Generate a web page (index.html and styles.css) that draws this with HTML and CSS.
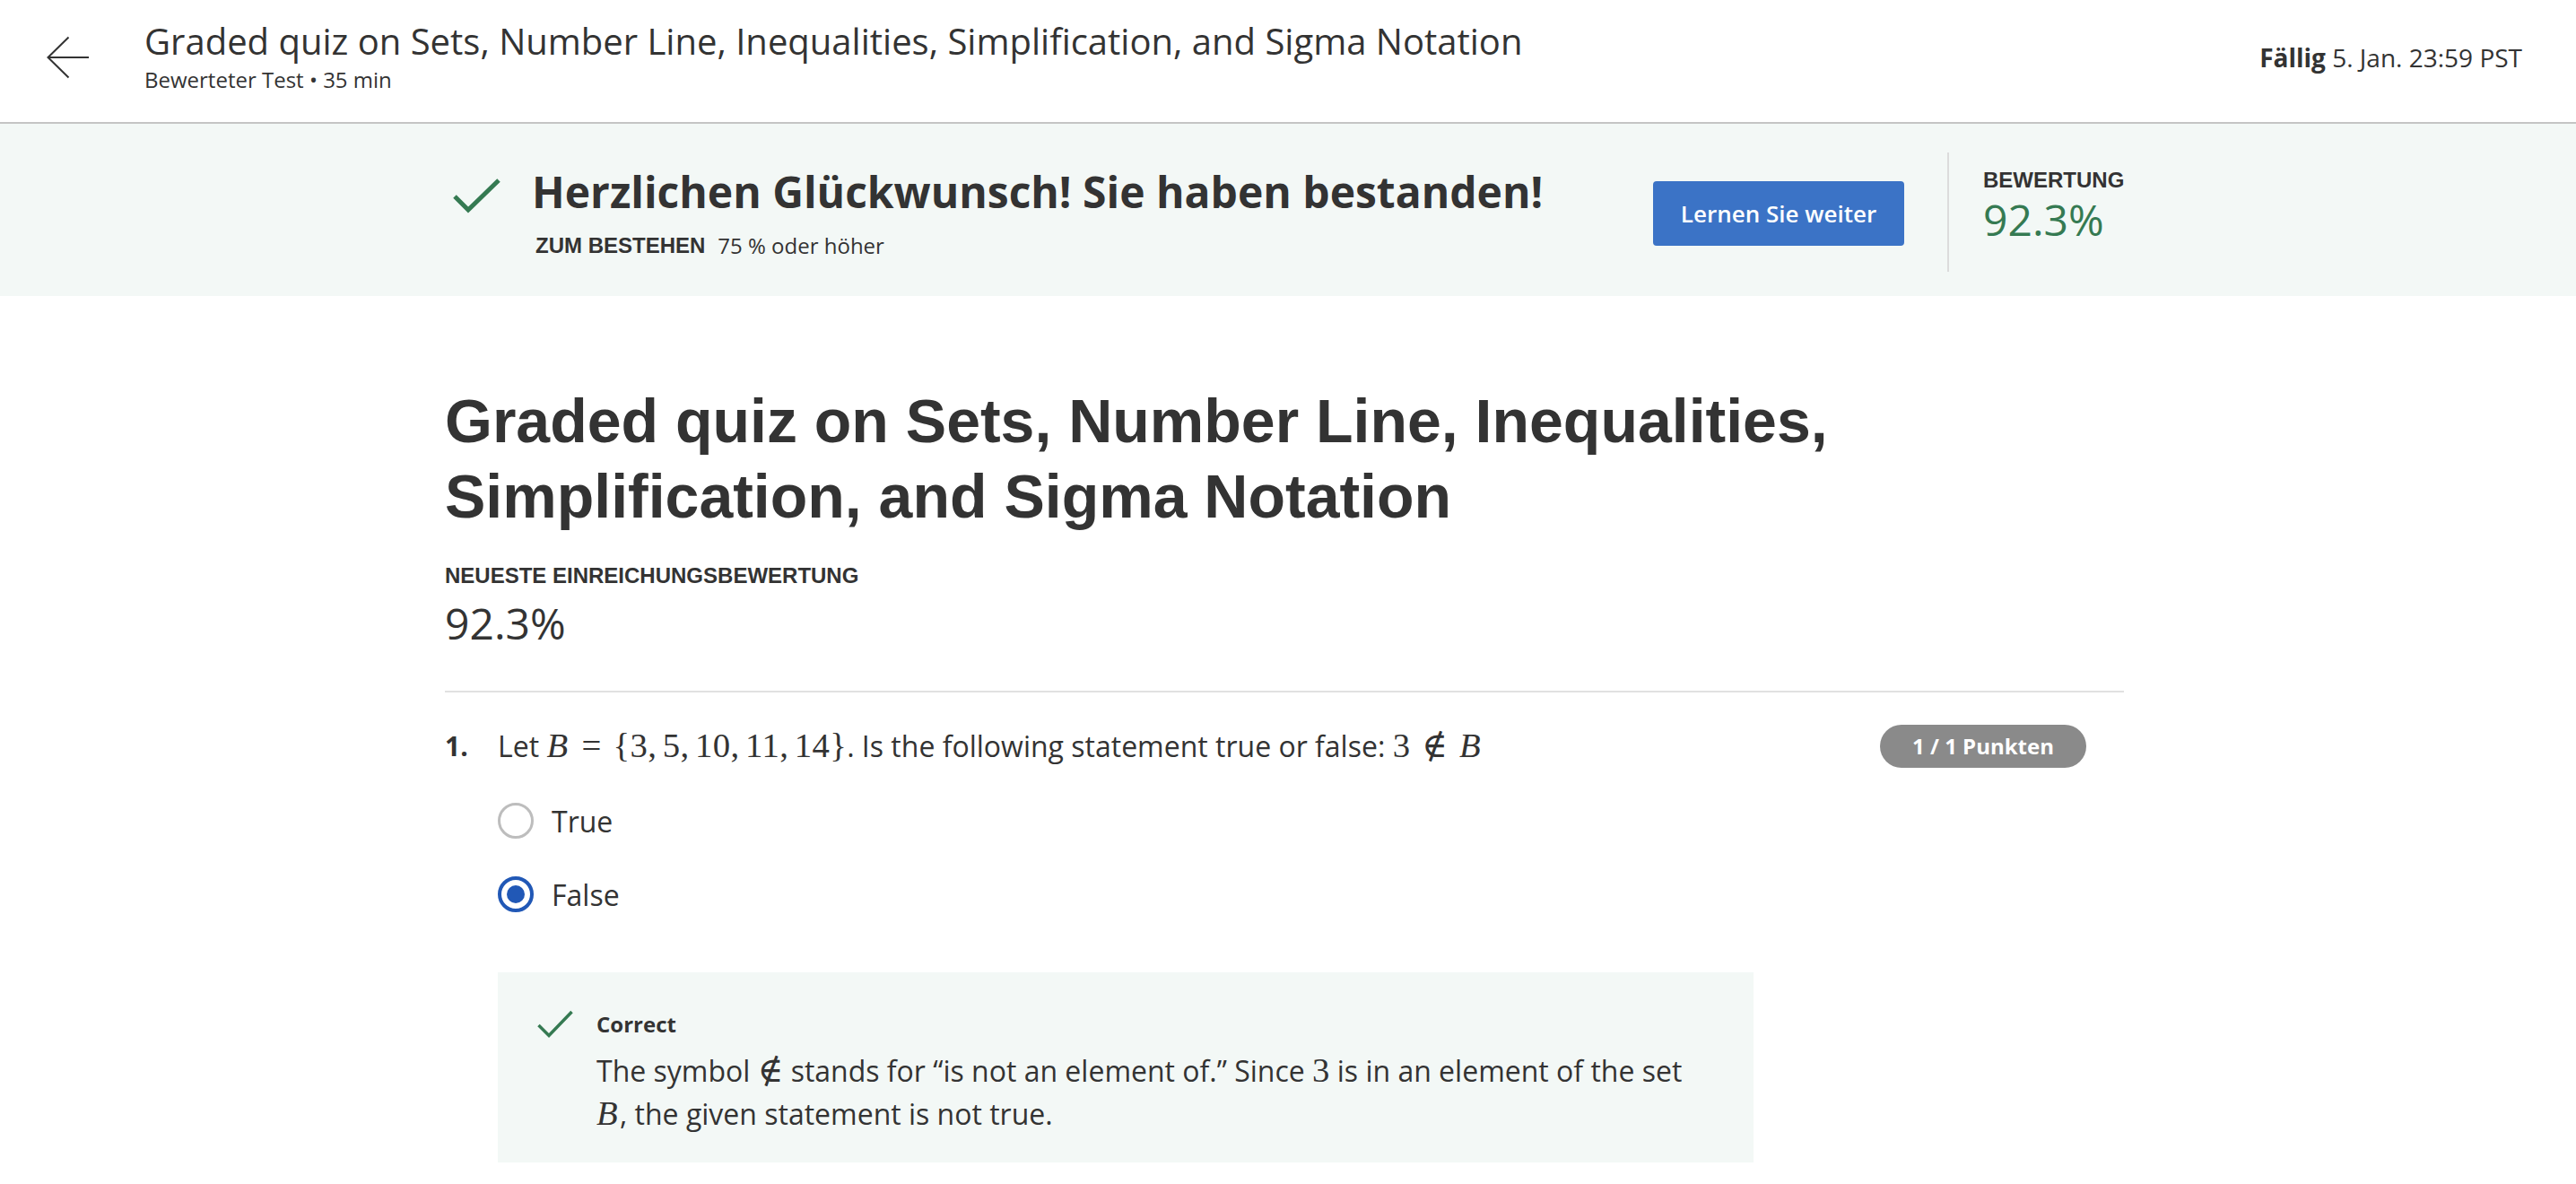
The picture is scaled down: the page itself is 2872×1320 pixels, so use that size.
FILE: index.html
```html
<!DOCTYPE html>
<html lang="de">
<head>
<meta charset="utf-8">
<title>Graded quiz on Sets, Number Line, Inequalities, Simplification, and Sigma Notation</title>
<link rel="stylesheet" href="styles.css">
</head>
<body>
<header class="topbar">
  <a class="back" href="#" aria-label="Zurück">
    <svg width="48" height="48" viewBox="0 0 48 48"><path d="M47 24H1.5M24.5 1.5L1.5 24L24.5 46.5" fill="none" stroke="#333" stroke-width="2"/></svg>
  </a>
  <div class="titles">
    <div class="title">Graded quiz on Sets, Number Line, Inequalities, Simplification, and Sigma Notation</div>
    <div class="subtitle">Bewerteter Test • 35 min</div>
  </div>
  <div class="due"><b>Fällig</b> 5. Jan. 23:59 PST</div>
</header>

<section class="banner">
  <div class="banner-inner">
    <div class="pass">
      <svg class="pass-check" width="53" height="40" viewBox="0 0 53 40"><polyline points="2,21 17,36 51,3" fill="none" stroke="#357a52" stroke-width="5"/></svg>
      <div class="pass-text">
        <div class="pass-title">Herzlichen Glückwunsch! Sie haben bestanden!</div>
        <div class="pass-sub"><span class="caps">ZUM BESTEHEN</span><span>75 % oder höher</span></div>
      </div>
    </div>
    <a class="btn" href="#">Lernen Sie weiter</a>
    <div class="vdivider"></div>
    <div class="grade">
      <div class="caps">BEWERTUNG</div>
      <div class="grade-value">92.3%</div>
    </div>
  </div>
</section>

<main class="content">
  <h1 class="quiz-title">Graded quiz on Sets, Number Line, Inequalities, Simplification, and Sigma Notation</h1>
  <div class="caps latest-label">NEUESTE EINREICHUNGSBEWERTUNG</div>
  <div class="latest-score">92.3%</div>
  <hr class="rule">

  <div class="question">
    <div class="qnum">1.</div>
    <div class="qbody">
      <div class="qhead">
        <div class="qtext">Let <span class="m"><i>B</i><span class="rel">=</span>{3<span class="pn">,</span>5<span class="pn">,</span>10<span class="pn">,</span>11<span class="pn">,</span>14}</span>. Is the following statement true or false: <span class="m">3<span class="rel">∉</span><i>B</i></span></div>
        <div class="badge">1 / 1 Punkten</div>
      </div>
      <div class="options">
        <label class="option"><span class="radio"></span><span>True</span></label>
        <label class="option"><span class="radio selected"><span class="dot"></span></span><span>False</span></label>
      </div>
      <div class="feedback">
        <svg class="fb-check" width="40" height="31" viewBox="0 0 40 31"><polyline points="1.5,17 13,28.5 38.5,2" fill="none" stroke="#357a52" stroke-width="3.5"/></svg>
        <div class="fb-body">
          <div class="fb-title">Correct</div>
          <p class="fb-text">The symbol <span class="m">∉</span> stands for “is not an element of.” Since <span class="m">3</span> is in an element of the set <span class="m"><i>B</i></span>, the given statement is not true.</p>
        </div>
      </div>
    </div>
  </div>
</main>
</body>
</html>
```

FILE: styles.css
```css
* { box-sizing: border-box; }

body {
  margin: 0;
  font-family: "Open Sans", "Noto Sans", sans-serif;
  color: #333;
  background: #fff;
}

/* top bar */
.topbar {
  display: flex;
  align-items: center;
  height: 138px;
  padding: 0 60px 8px 52px;
  border-bottom: 2px solid #c4c4c4;
}
.back { display: flex; width: 48px; height: 48px; margin-right: 61px; }
.titles { flex: 1; display: flex; flex-direction: column; }
.title { font-size: 40px; line-height: 47px; }
.subtitle { font-size: 24px; line-height: 36px; margin-top: 2px; }
.due { font-size: 28px; line-height: 40px; }
.due b { font-weight: 700; }

/* banner */
.banner { background: #f3f8f6; height: 192px; padding-top: 8px; }
.banner-inner {
  width: 1872px;
  height: 100%;
  margin-left: calc(50% - 940px);
  display: flex;
  align-items: center;
}
.pass { display: flex; align-items: flex-start; }
.pass-check { margin: 14px 35px 0 9px; flex: none; }
.pass-title { font-size: 48px; line-height: 60px; font-weight: 700; }
.pass-sub { margin-top: 12px; padding-left: 4px; font-size: 24px; line-height: 36px; display: flex; }
.caps {
  font-family: "Liberation Sans", Arial, sans-serif;
  font-weight: 700;
  font-size: 24px;
  line-height: 36px;
}
.pass-sub .caps { margin-right: 14px; }
.btn {
  margin-left: auto;
  width: 280px;
  height: 72px;
  display: flex;
  align-items: center;
  justify-content: center;
  background: #3b73c6;
  border-radius: 4px;
  color: #fff;
  font-size: 26px;
  font-weight: 600;
  text-decoration: none;
}
.vdivider { width: 2px; height: 133px; background: #dcdcdc; margin: 0 38px 4px 48px; }
.grade { width: 157px; align-self: flex-start; margin-top: 37px; }
.grade-value { color: #357a52; font-size: 48px; line-height: 51px; }

/* content */
.content { width: 1872px; margin-left: calc(50% - 940px); padding: 97px 0 120px; }
.quiz-title {
  margin: 0;
  font-family: "Liberation Sans", Arial, sans-serif;
  font-weight: 700;
  font-size: 68px;
  line-height: 84.4px;
}
.latest-label { margin-top: 28px; }
.latest-score { margin-top: 6px; font-size: 48px; line-height: 57.6px; }
.rule { margin: 47px 0 0; border: none; height: 2px; background: #e1e1e1; }

.question { margin-top: 36px; display: flex; align-items: flex-start; }
.qnum { width: 59px; flex: none; font-size: 30px; line-height: 48px; font-weight: 700; }
.qbody { flex: 1; }
.qhead { display: flex; align-items: flex-start; }
.qtext { flex: 1; font-size: 32px; line-height: 48px; }
.badge {
  flex: none;
  width: 230px;
  height: 48px;
  margin-right: 42px;
  border-radius: 24px;
  background: #8a8a8a;
  color: #fff;
  font-size: 24px;
  font-weight: 700;
  line-height: 48px;
  text-align: center;
}

.m {
  font-family: "Liberation Serif", "DejaVu Serif", serif;
  font-size: 1.21em;
  line-height: 1;
}
.m i { font-style: italic; padding-right: 0.06em; }
.qtext .m { letter-spacing: 0.01em; }
.rel { margin: 0 0.33em; }
.pn { margin-right: 0.1667em; }

.options { margin-top: 35px; display: flex; flex-direction: column; gap: 34px; }
.option { display: flex; align-items: center; gap: 20px; height: 48px; font-size: 32px; }
.radio {
  width: 40px;
  height: 40px;
  border-radius: 50%;
  border: 3px solid #bdbdbd;
  background: #fff;
  display: flex;
  align-items: center;
  justify-content: center;
  flex: none;
}
.radio.selected { border: 4px solid #2158b6; }
.dot { width: 20px; height: 20px; border-radius: 50%; background: #2158b6; }

.feedback {
  margin-top: 63px;
  width: 1400px;
  background: #f3f8f6;
  padding: 40px 64px 30px 44px;
  display: flex;
  gap: 26px;
}
.fb-check { flex: none; margin-top: 2px; }
.fb-title { font-size: 24px; line-height: 36px; font-weight: 700; }
.fb-text { margin: 10px 0 0; font-size: 32px; line-height: 48px; }
```
